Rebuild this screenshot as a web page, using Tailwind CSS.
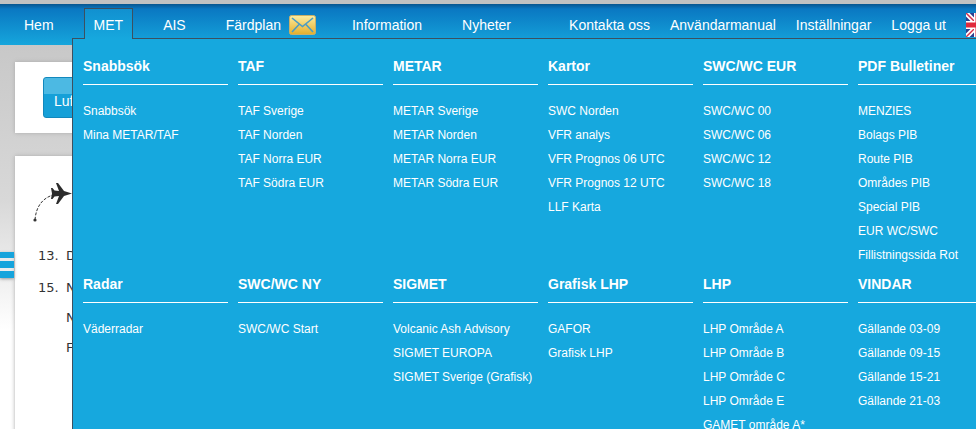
<!DOCTYPE html>
<html lang="en">
<head>
  <meta charset="UTF-8" />
  <meta name="viewport" content="width=device-width, initial-scale=1" />
  <title>MET</title>
  <script src="https://cdn.jsdelivr.net/npm/@tailwindcss/browser@4"></script>
</head>
<body class="h-[429px] overflow-hidden relative font-['Liberation_Sans',Arial,sans-serif] bg-[linear-gradient(#c8c8c8_45px,#d8d8d8_200px,#ffffff_330px)]">
  <div class="h-[4px] bg-[#c2c2c2]"></div>

  <!-- top nav -->
  <nav class="h-[41px] bg-[linear-gradient(#08568f,#0a78c2_5px,#16a6dc)] flex items-center pl-6 text-sm text-white whitespace-nowrap">
    <div class="flex items-center gap-10 h-full">
      <a>Hem</a>
      <a class="relative z-20 self-start h-[31px] mt-[4px] -mx-[10px] px-[9px] pt-[6px] border border-b-0 border-[#3c5060] bg-[linear-gradient(#1190d0,#16a8de)]">MET</a>
      <a>AIS</a>
      <a class="flex items-center gap-2">Färdplan
        <svg width="27" height="20" viewBox="0 0 27 20">
          <defs><linearGradient id="env" x1="0" y1="0" x2="0" y2="1"><stop offset="0" stop-color="#fdeda0"/><stop offset="1" stop-color="#e3ae2c"/></linearGradient></defs>
          <rect x="0.5" y="0.5" width="26" height="19" rx="2" fill="url(#env)" stroke="#c9b069"/>
          <path d="M3 3 L13.5 11.5 L24 3 M3 17 L10 9.5 M24 17 L17 9.5" fill="none" stroke="#4a9cc4" stroke-width="1.6"/>
        </svg>
      </a>
      <a class="-ml-1">Information</a>
      <a>Nyheter</a>
    </div>
    <div class="flex items-center gap-5 ml-[58px]">
      <a>Kontakta oss</a>
      <a>Användarmanual</a>
      <a>Inställningar</a>
      <a>Logga ut</a>
    </div>
    <svg class="ml-5 shrink-0" width="24" height="24" viewBox="0 0 24 24">
      <rect width="24" height="24" fill="#2d3f8f"/>
      <path d="M0 0 L24 24 M24 0 L0 24" stroke="#fff" stroke-width="5"/>
      <path d="M0 0 L24 24 M24 0 L0 24" stroke="#d6304a" stroke-width="1.5"/>
      <path d="M12 0 V24 M0 12 H24" stroke="#fff" stroke-width="8"/>
      <path d="M12 0 V24 M0 12 H24" stroke="#e02a3c" stroke-width="5"/>
    </svg>
  </nav>

  <!-- page behind the menu -->
  <main class="pl-[15px] pt-[17px]">
    <section class="w-[300px] h-[71px] bg-white shadow-[0_0_4px_#aaa] pt-[15px] pl-7">
      <button class="w-[90px] h-[41px] rounded-[3px] border border-[#1288bd] text-sm text-white text-left pl-[10px] pt-[6px] bg-[linear-gradient(#4cb9e3_40%,#16a0d8_40%)]">Luftrum</button>
    </section>
    <section class="relative w-[300px] h-[280px] mt-[23px] bg-white shadow-[0_0_4px_#aaa]">
      <svg class="absolute left-4 top-[26px]" width="50" height="42" viewBox="0 0 50 42">
        <path d="M4 38 C5 24 12 16 22 13" fill="none" stroke="#333" stroke-width="1" stroke-dasharray="3 1.5"/>
        <circle cx="4" cy="38" r="1.6" fill="#333"/>
        <path d="M41 11.5 L33 9 L27 1 L25 1 L28 9 L23.5 8.5 L21.5 6 L20 6 L21 11.5 L20 17 L21.5 17 L23.5 14.5 L28 14 L25 22 L27 22 L33 14 Z" fill="#2c2c2c"/>
      </svg>
      <ul class="pt-[92px] pl-[23px] text-[13px] leading-[15px] font-['DejaVu_Sans',sans-serif] text-[#333] flex flex-col gap-[15px]">
        <li class="flex gap-[10px] mb-[2px]"><span class="w-[18px]">13.</span><span>Driftinfo</span></li>
        <li class="flex gap-[10px]"><span class="w-[18px]">15.</span><span>Notam</span></li>
        <li class="pl-[28px]">NOF</li>
        <li class="pl-[28px]">Flygväder</li>
      </ul>
    </section>
    <div class="absolute left-0 top-[252px] w-[14px] flex flex-col gap-[3px] shadow-[0_1px_3px_#999]">
      <div class="h-[6px] bg-[#16a4dc]"></div>
      <div class="h-[7px] bg-[#16a4dc]"></div>
      <div class="h-[7px] bg-[#16a4dc]"></div>
    </div>
  </main>

  <!-- MET dropdown -->
  <div class="absolute z-10 left-[72px] top-[38px] w-[904px] h-[391px] overflow-hidden bg-[#16a8de] border-l border-t border-[#3c5060] text-white pl-[10px] pt-[18px] grid grid-cols-[repeat(6,145px)] gap-x-[10px] auto-rows-[218px]">
    <div>
      <h3 class="text-sm font-bold leading-[18px] pb-[9px] border-b border-white">Snabbsök</h3>
      <ul class="mt-[14px] text-xs leading-6"><li>Snabbsök</li><li>Mina METAR/TAF</li></ul>
    </div>
    <div>
      <h3 class="text-sm font-bold leading-[18px] pb-[9px] border-b border-white">TAF</h3>
      <ul class="mt-[14px] text-xs leading-6"><li>TAF Sverige</li><li>TAF Norden</li><li>TAF Norra EUR</li><li>TAF Södra EUR</li></ul>
    </div>
    <div>
      <h3 class="text-sm font-bold leading-[18px] pb-[9px] border-b border-white">METAR</h3>
      <ul class="mt-[14px] text-xs leading-6"><li>METAR Sverige</li><li>METAR Norden</li><li>METAR Norra EUR</li><li>METAR Södra EUR</li></ul>
    </div>
    <div>
      <h3 class="text-sm font-bold leading-[18px] pb-[9px] border-b border-white">Kartor</h3>
      <ul class="mt-[14px] text-xs leading-6"><li>SWC Norden</li><li>VFR analys</li><li>VFR Prognos 06 UTC</li><li>VFR Prognos 12 UTC</li><li>LLF Karta</li></ul>
    </div>
    <div>
      <h3 class="text-sm font-bold leading-[18px] pb-[9px] border-b border-white">SWC/WC EUR</h3>
      <ul class="mt-[14px] text-xs leading-6"><li>SWC/WC 00</li><li>SWC/WC 06</li><li>SWC/WC 12</li><li>SWC/WC 18</li></ul>
    </div>
    <div>
      <h3 class="text-sm font-bold leading-[18px] pb-[9px] border-b border-white">PDF Bulletiner</h3>
      <ul class="mt-[14px] text-xs leading-6"><li>MENZIES</li><li>Bolags PIB</li><li>Route PIB</li><li>Områdes PIB</li><li>Special PIB</li><li>EUR WC/SWC</li><li>Fillistningssida Rot</li></ul>
    </div>
    <div>
      <h3 class="text-sm font-bold leading-[18px] pb-[9px] border-b border-white">Radar</h3>
      <ul class="mt-[14px] text-xs leading-6"><li>Väderradar</li></ul>
    </div>
    <div>
      <h3 class="text-sm font-bold leading-[18px] pb-[9px] border-b border-white">SWC/WC NY</h3>
      <ul class="mt-[14px] text-xs leading-6"><li>SWC/WC Start</li></ul>
    </div>
    <div>
      <h3 class="text-sm font-bold leading-[18px] pb-[9px] border-b border-white">SIGMET</h3>
      <ul class="mt-[14px] text-xs leading-6"><li>Volcanic Ash Advisory</li><li>SIGMET EUROPA</li><li>SIGMET Sverige (Grafisk)</li></ul>
    </div>
    <div>
      <h3 class="text-sm font-bold leading-[18px] pb-[9px] border-b border-white">Grafisk LHP</h3>
      <ul class="mt-[14px] text-xs leading-6"><li>GAFOR</li><li>Grafisk LHP</li></ul>
    </div>
    <div>
      <h3 class="text-sm font-bold leading-[18px] pb-[9px] border-b border-white">LHP</h3>
      <ul class="mt-[14px] text-xs leading-6"><li>LHP Område A</li><li>LHP Område B</li><li>LHP Område C</li><li>LHP Område E</li><li>GAMET område A*</li></ul>
    </div>
    <div>
      <h3 class="text-sm font-bold leading-[18px] pb-[9px] border-b border-white">VINDAR</h3>
      <ul class="mt-[14px] text-xs leading-6"><li>Gällande 03-09</li><li>Gällande 09-15</li><li>Gällande 15-21</li><li>Gällande 21-03</li></ul>
    </div>
  </div>
</body>
</html>
